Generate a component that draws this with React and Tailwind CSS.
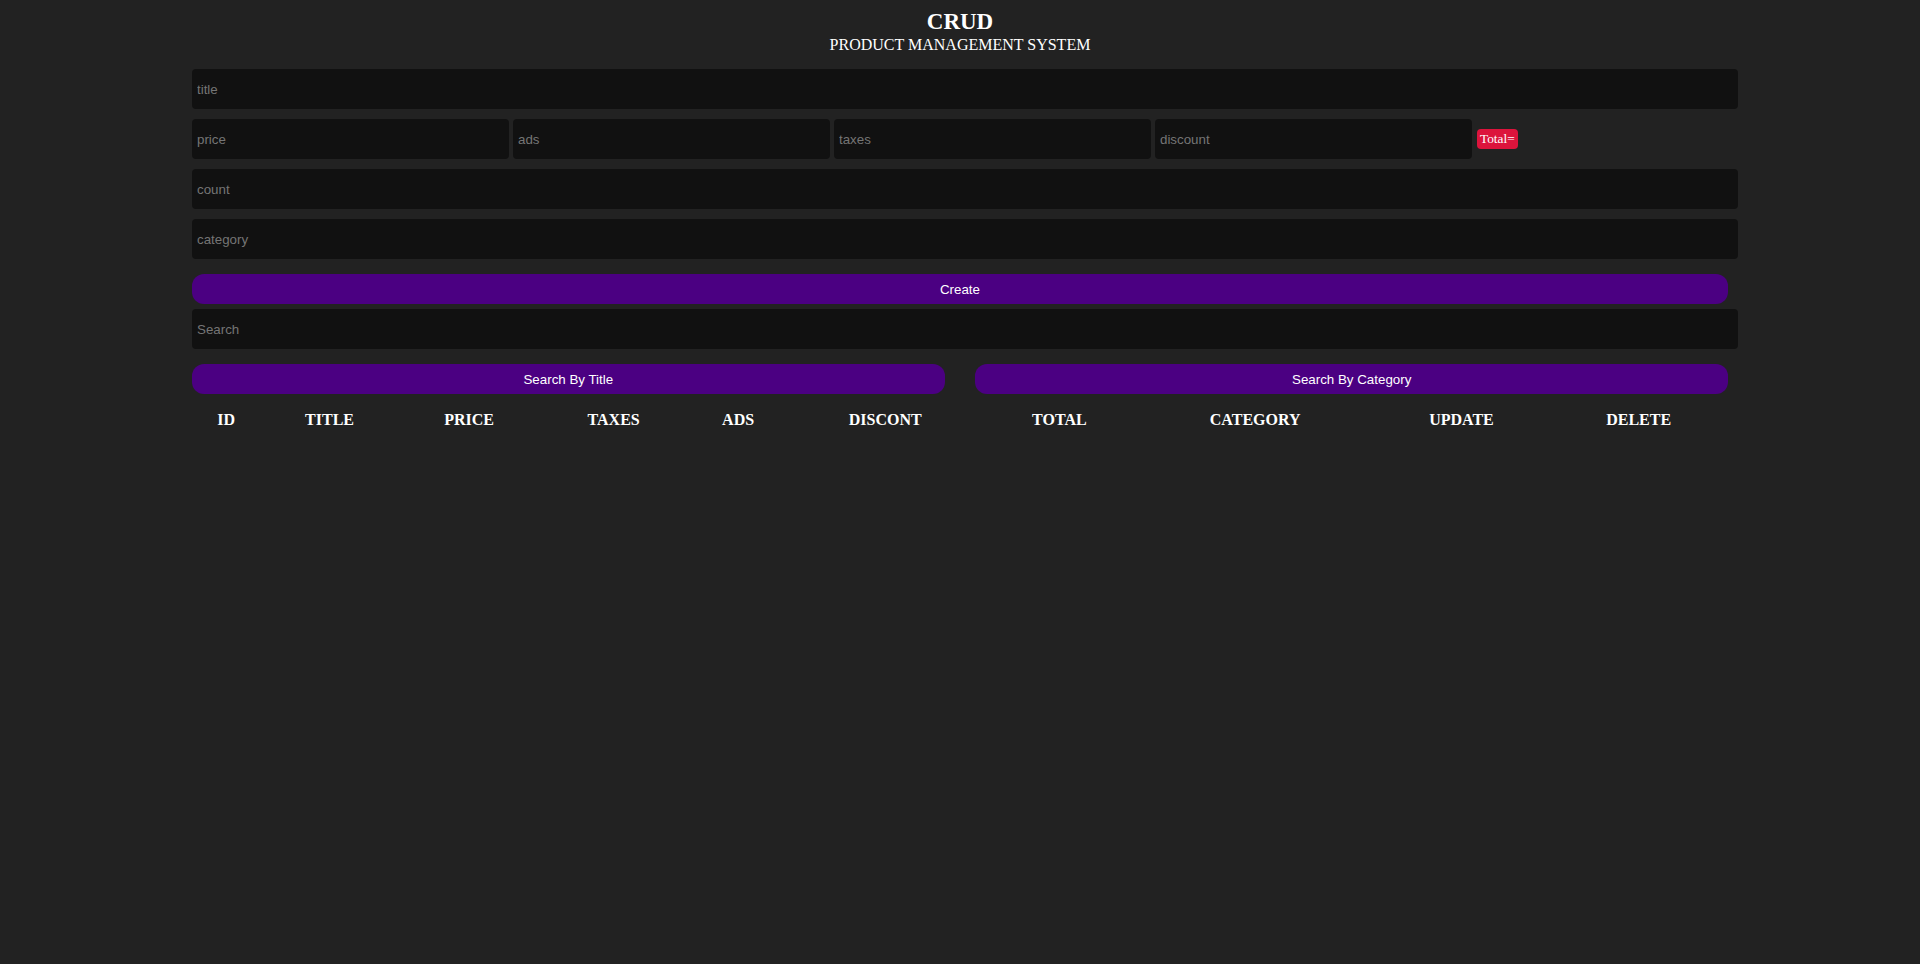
import React from 'react';

const inputCls =
  "h-[40px] rounded-[4px] bg-[#111111] px-[5px] text-[13.33px] text-white outline-none border-none placeholder:text-[#757575] font-['Liberation_Sans',Arial,sans-serif]";

const btnCls =
  "h-[30px] pt-[2px] rounded-[12px] bg-[#4b0082] text-white text-[13.33px] font-['Liberation_Sans',Arial,sans-serif]";

const columns = ['ID', 'TITLE', 'PRICE', 'TAXES', 'ADS', 'DISCONT', 'TOTAL', 'CATEGORY', 'UPDATE', 'DELETE'];

const App = () => {
  return (
    <div className="min-h-screen bg-[#222222] text-white font-['Liberation_Serif','Times_New_Roman',serif]">
      <div className="w-[1536px] mx-auto flex flex-col">
        <div className="pt-[8px] text-center">
          <h2 className="text-[23px] leading-[27px] font-bold">CRUD</h2>
          <p className="text-[16px] leading-[19px]">PRODUCT MANAGEMENT SYSTEM</p>
        </div>

        <input className={`${inputCls} w-[1546px] mt-[15px]`} placeholder="title" />

        <div className="flex items-center gap-[4px] mt-[10px]">
          <input className={`${inputCls} w-[317px]`} placeholder="price" />
          <input className={`${inputCls} w-[317px]`} placeholder="ads" />
          <input className={`${inputCls} w-[317px]`} placeholder="taxes" />
          <input className={`${inputCls} w-[317px]`} placeholder="discount" />
          <small className="ml-[1px] h-[20px] px-[3px] rounded-[4px] bg-[#dc143c] text-[13.33px] leading-[20px] text-white">
            Total=
          </small>
        </div>

        <input className={`${inputCls} w-[1546px] mt-[10px]`} placeholder="count" />
        <input className={`${inputCls} w-[1546px] mt-[10px]`} placeholder="category" />

        <button className={`${btnCls} w-full mt-[15px]`}>Create</button>

        <input className={`${inputCls} w-[1546px] mt-[5px]`} placeholder="Search" />

        <div className="flex justify-between mt-[15px]">
          <button className={`${btnCls} w-[49%]`}>Search By Title</button>
          <button className={`${btnCls} w-[49%]`}>Search By Category</button>
        </div>

        <div className="grid grid-cols-[68fr_138fr_140fr_148fr_100fr_193fr_154fr_236fr_175fr_178fr] mt-[17px]">
          {columns.map(col => (
            <div key={col} className="text-center text-[16px] leading-[18px] font-bold">
              {col}
            </div>
          ))}
        </div>
      </div>
    </div>
  );
};

export default App;
